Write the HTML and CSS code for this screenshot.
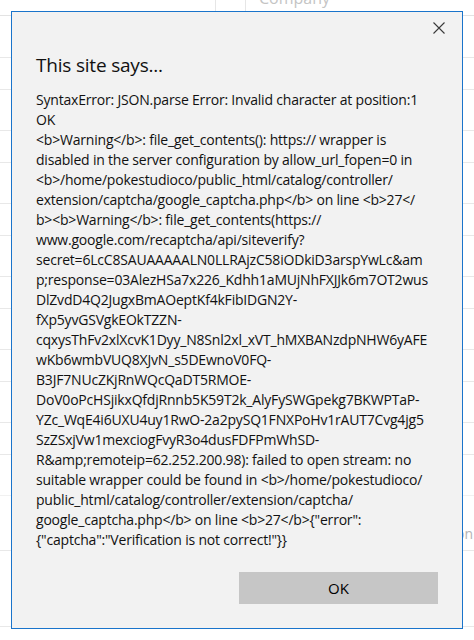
FILE: index.html
```html
<!DOCTYPE html>
<html lang="en">
<head>
<meta charset="utf-8">
<title>This site says...</title>
<link rel="stylesheet" href="styles.css">
</head>
<body>
<div class="page">
  <div class="grid">
    <div class="row head">
      <div class="cell c1"></div>
      <div class="cell c2"></div>
      <div class="cell c3"><span class="head-label">Company</span></div>
    </div>
    <div class="row tall"></div>
    <div class="row short"></div>
    <div class="row tall"></div>
    <div class="row short"></div>
    <div class="row tall"></div>
    <div class="row short"></div>
    <div class="row tall"></div>
    <div class="row short"></div>
    <div class="row tall"></div>
    <div class="row short"></div>
    <div class="row tall"></div>
    <div class="row short"></div>
    <div class="row tall faint"></div>
    <div class="row wide"><span class="row-label">Location</span></div>
    <div class="row foot"></div>
    <div class="row rest"></div>
  </div>
</div>

<div class="dialog" role="dialog" aria-labelledby="dlg-title">
  <div class="dialog-top">
    <button class="close" type="button" aria-label="Close">
      <svg width="12" height="12" viewBox="0 0 12 12" aria-hidden="true">
        <path d="M0.5 0.5 L11.5 11.5 M11.5 0.5 L0.5 11.5" stroke="#3a3a3a" stroke-width="1.1" fill="none"/>
      </svg>
    </button>
  </div>
  <h1 class="dialog-title" id="dlg-title">This site says...</h1>
  <div class="dialog-body">SyntaxError: JSON.parse Error: Invalid character at position:1<br>OK<br>&lt;b&gt;Warning&lt;/b&gt;: file_get_contents(): https:// wrapper is<br>disabled in the server configuration by allow_url_fopen=0 in<br>&lt;b&gt;/home/pokestudioco/public_html/catalog/controller/<br>extension/captcha/google_captcha.php&lt;/b&gt; on line &lt;b&gt;27&lt;/<br>b&gt;&lt;b&gt;Warning&lt;/b&gt;: file_get_contents(https://<br>www.google.com/recaptcha/api/siteverify?<br>secret=6LcC8SAUAAAAALN0LLRAjzC58iODkiD3arspYwLc&amp;am<br>p;response=03AlezHSa7x226_Kdhh1aMUjNhFXJJk6m7OT2wus<br>DlZvdD4Q2JugxBmAOeptKf4kFibIDGN2Y-<br>fXp5yvGSVgkEOkTZZN-<br>cqxysThFv2xlXcvK1Dyy_N8Snl2xl_xVT_hMXBANzdpNHW6yAFE<br>wKb6wmbVUQ8XJvN_s5DEwnoV0FQ-<br>B3JF7NUcZKjRnWQcQaDT5RMOE-<br>DoV0oPcHSjikxQfdjRnnb5K59T2k_AlyFySWGpekg7BKWPTaP-<br>YZc_WqE4i6UXU4uy1RwO-2a2pySQ1FNXPoHv1rAUT7Cvg4jg5<br>SzZSxjVw1mexciogFvyR3o4dusFDFPmWhSD-<br>R&amp;amp;remoteip=62.252.200.98): failed to open stream: no<br>suitable wrapper could be found in &lt;b&gt;/home/pokestudioco/<br>public_html/catalog/controller/extension/captcha/<br>google_captcha.php&lt;/b&gt; on line &lt;b&gt;27&lt;/b&gt;{"error":<br>{"captcha":"Verification is not correct!"}}</div>
  <div class="dialog-actions">
    <button class="ok" type="button">OK</button>
  </div>
</div>
</body>
</html>
```

FILE: styles.css
```css
* {
  box-sizing: border-box;
}

html, body {
  margin: 0;
  padding: 0;
  background: #ffffff;
}

body {
  width: 474px;
  height: 640px;
  overflow: hidden;
  font-family: "Open Sans", "Noto Sans", sans-serif;
  position: relative;
}

/* background page (table grid) */
.grid {
  display: flex;
  flex-direction: column;
}

.row {
  border-bottom: 1px solid #e8e8e8;
  display: flex;
}

.head { height: 16px; border-bottom-color: #e3e3e3; }
.tall { height: 42px; }
.row.tall + .row.short { height: 32px; }
.row.short + .row.tall { height: 41px; }
.short { height: 33px; }
.faint { border-bottom-color: #f1f1f1; }
.wide {
  height: 55px;
  justify-content: flex-end;
  align-items: flex-start;
}
.foot { height: 76px; }
.rest { height: 40px; border-bottom: none; }

.cell {
  height: 100%;
}
.c1 { width: 216px; border-right: 1px solid #e6e6e6; }
.c2 { width: 30px; border-right: 1px solid #e6e6e6; }
.c3 { flex: 1; padding-left: 13px; overflow: hidden; }

.head-label {
  display: block;
  margin-top: -12px;
  font-size: 16px;
  line-height: 20px;
  color: #c4c4c4;
}

.row-label {
  margin-top: 29px;
  padding-right: 1px;
  font-size: 14px;
  line-height: 18px;
  color: #b4b4b4;
}

/* dialog */
.dialog {
  position: absolute;
  left: 11px;
  top: 11px;
  width: 452px;
  height: 618px;
  border: 1px solid #1a74cb;
  background: #f2f2f2;
  display: flex;
  flex-direction: column;
  color: #000;
}

.dialog-top {
  display: flex;
  justify-content: flex-end;
  padding: 4px 11px 0 0;
}

.close {
  width: 24px;
  height: 24px;
  border: 0;
  padding: 0;
  margin: 0;
  background: transparent;
  display: flex;
  align-items: center;
  justify-content: center;
}

.close svg {
  display: block;
}

.dialog-title {
  margin: 11px 0 0 0;
  padding: 0 24px;
  font-size: 19px;
  line-height: 28px;
  letter-spacing: -0.2px;
  font-weight: 400;
  color: #111;
}

.dialog-body {
  margin-top: 11px;
  padding: 0 24px;
  font-size: 14px;
  line-height: 20px;
  letter-spacing: -0.2px;
  white-space: nowrap;
  color: #111;
}

.dialog-actions {
  margin-top: auto;
  display: flex;
  justify-content: flex-end;
  padding: 0 24px 24px 0;
}

.ok {
  width: 199px;
  height: 32px;
  border: 0;
  background: #c6c6c6;
  font-family: inherit;
  font-size: 15px;
  color: #000;
  padding: 0;
}
```
